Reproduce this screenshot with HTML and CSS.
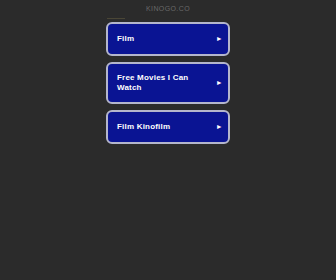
FILE: index.html
```html
<!DOCTYPE html>
<html>
<head>
<meta charset="utf-8">
<link rel="stylesheet" href="styles.css">
</head>
<body>
<div class="page">
  <div class="domain">KINOGO.CO</div>
  <div class="rule"></div>
  <ul class="links">
    <li class="link"><span class="label">Film</span><span class="arrow">&#9658;</span></li>
    <li class="link tall"><span class="label">Free Movies I Can Watch</span><span class="arrow">&#9658;</span></li>
    <li class="link"><span class="label">Film Kinofilm</span><span class="arrow">&#9658;</span></li>
  </ul>
</div>
</body>
</html>
```
FILE: styles.css
```css
html, body {
  margin: 0;
  padding: 0;
  background: #2b2b2b;
}
.page {
  width: 336px;
  height: 280px;
  display: flex;
  flex-direction: column;
  align-items: center;
  font-family: "Liberation Sans", Arial, sans-serif;
}
.domain {
  margin-top: 4px;
  height: 9px;
  font-size: 7px;
  line-height: 9px;
  color: #686868;
  letter-spacing: 0.4px;
}
.rule {
  align-self: flex-start;
  margin-left: 107px;
  margin-top: 5px;
  width: 18px;
  height: 1px;
  background: #4a4636;
}
.links {
  list-style: none;
  margin: 3px 0 0 0;
  padding: 0;
  display: flex;
  flex-direction: column;
  gap: 6px;
}
.link {
  box-sizing: border-box;
  width: 124px;
  min-height: 34px;
  border: 2px solid #b4b6cc;
  border-radius: 6px;
  background: #0a1493;
  display: flex;
  align-items: center;
  justify-content: space-between;
  padding: 0 5px 0 9px;
  color: #ffffff;
  font-size: 8px;
  font-weight: bold;
  line-height: 10px;
  letter-spacing: 0.2px;
}
.link.tall {
  min-height: 42px;
}
.label {
  max-width: 84px;
}
.arrow {
  font-size: 7px;
  color: #ffffff;
}
```
